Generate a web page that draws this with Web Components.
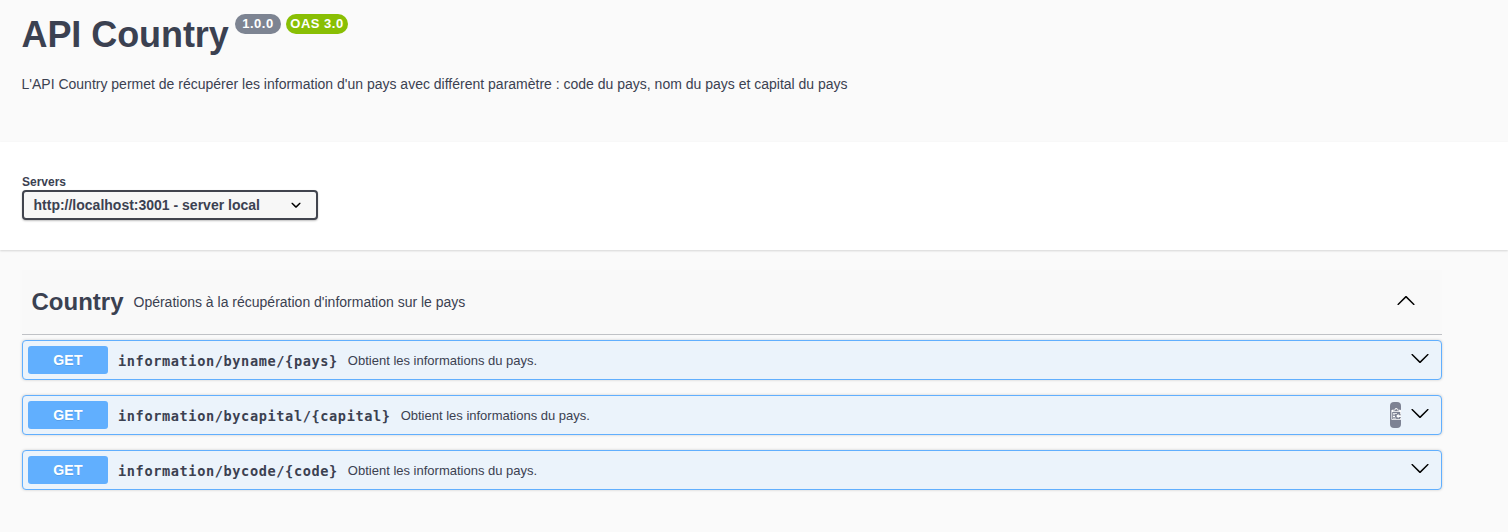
<!DOCTYPE html>
<html lang="fr">
<head>
<meta charset="utf-8">
<title>API Country</title>
<style>
body{margin:0;background:#fafafa;font-family:"Liberation Sans",Arial,sans-serif;color:#3b4151;height:532px;overflow:hidden}
</style>
</head>
<body>
<api-docs></api-docs>
<script>
function define(name, html, setup) {
  const template = document.createElement('template');
  template.innerHTML = html;
  customElements.define(name, class extends HTMLElement {
    connectedCallback() {
      if (this.shadowRoot) return;
      const root = this.attachShadow({ mode: 'open' });
      root.append(template.content.cloneNode(true));
      if (setup) setup(this, root);
    }
  });
}

const CHEVRON_DOWN = 'M17.418 6.109c.272-.268.709-.268.979 0s.271.701 0 .969l-7.908 7.83c-.27.268-.707.268-.979 0l-7.908-7.83c-.27-.268-.27-.701 0-.969.271-.268.709-.268.979 0L10 13.25l7.418-7.141z';
const CHEVRON_UP = 'M17.418 14.908c.272.268.709.268.979 0s.271-.701 0-.969l-7.908-7.83c-.27-.268-.707-.268-.979 0l-7.908 7.83c-.27.268-.27.701 0 .969.271.268.709.268.979 0L10 7.767l7.418 7.141z';
const CHEVRON_SMALL = 'M13.418 7.859c.271-.268.709-.268.978 0 .27.268.272.701 0 .969l-3.908 3.83c-.27.268-.707.268-.979 0l-3.908-3.83c-.27-.267-.27-.701 0-.969.271-.268.709-.268.978 0L10 11l3.418-3.141z';

define('chevron-icon', `
<style>:host{display:block;flex:none;width:20px;height:20px}svg{display:block}</style>
<svg width="20" height="20" viewBox="0 0 20 20"><path/></svg>`, (el, root) => {
  const shapes = { up: CHEVRON_UP, small: CHEVRON_SMALL };
  root.querySelector('path').setAttribute('d', shapes[el.getAttribute('kind')] || CHEVRON_DOWN);
});

define('version-badge', `
<style>
:host{display:flex;align-items:center;justify-content:center;box-sizing:border-box;width:46px;height:20px;border-radius:10px;background:#7d8492;color:#fff;font:bold 13px/20px "Liberation Sans",Arial,sans-serif;letter-spacing:.5px;white-space:nowrap}
:host([oas]){width:62px;background:#89bf04}
</style><slot></slot>`);

define('api-info', `
<style>
:host{display:block;box-sizing:border-box;height:142px;padding:14px 22px 0 21.5px}
header{display:flex;height:41px;gap:5px;align-items:flex-start}
h1{margin:0 2.5px 0 0;font-size:36px;line-height:41px;width:206px;letter-spacing:-.07px;white-space:nowrap}
p{margin:21px 0 0;font-size:14px;line-height:16px;white-space:nowrap}
</style>
<header><h1><slot name="title"></slot></h1><slot name="badges"></slot></header>
<p><slot></slot></p>`);

define('server-picker', `
<style>
:host{display:block;box-sizing:border-box;height:108px;padding:33px 22px 0;background:#fff;box-shadow:0 1px 2px rgba(0,0,0,.15)}
label{display:block;font-size:12px;font-weight:bold;line-height:15px;height:15px}
.select{display:flex;justify-content:space-between;align-items:center;box-sizing:border-box;width:296px;height:30px;padding:0 10px 0 9.5px;border:2px solid #41444e;border-radius:4px;background:#f7f7f7;box-shadow:0 1px 2px rgba(0,0,0,.25);font-size:14px;font-weight:bold}
</style>
<label>Servers</label>
<div class="select"><span><slot></slot></span><chevron-icon kind="small"></chevron-icon></div>`);

define('tag-section', `
<style>
:host{display:block;width:1420px;margin:20px 0 0 22px}
header{display:flex;align-items:center;box-sizing:border-box;height:65px;padding:0 26px 0 9.5px;background:#f9f9f9;border-bottom:1px solid rgba(59,65,81,.3)}
h3{margin:0;width:102px;font-size:24px;line-height:28px}
p{margin:0;flex:1;font-size:14px;line-height:16px}
chevron-icon{margin-bottom:4px}
.ops{display:flex;flex-direction:column;gap:15px;padding-top:5px}
</style>
<header><h3><slot name="title"></slot></h3><p><slot name="description"></slot></p><chevron-icon kind="up"></chevron-icon></header>
<div class="ops"><slot></slot></div>`);

define('copy-button', `
<style>
:host{display:flex;align-items:center;box-sizing:border-box;flex:none;width:11px;height:26px;padding:0 0 1px 1px;border-radius:4px;background:#7d8293;overflow:hidden}
svg{display:block;flex:none}
</style>
<svg width="12" height="13" viewBox="1.5 0 15 16"><path fill="#fff" d="M4 12h4v1H4v-1zm5-6H4v1h5V6zm2 3V7l-3 3 3 3v-2h5V9h-5zM6.5 8H4v1h2.5V8zM4 11h2.5v-1H4v1zm9 1h1v2c-.02.28-.11.52-.3.7-.19.18-.42.28-.7.3H3c-.55 0-1-.45-1-1V3c0-.55.45-1 1-1h3c0-1.11.89-2 2-2 1.11 0 2 .89 2 2h3c.55 0 1 .45 1 1v5h-1V5H3v9h10v-2zM4 4h8c0-.55-.45-1-1-1h-1c-.55 0-1-.45-1-1s-.45-1-1-1-1 .45-1 1-.45 1-1 1H5c-.55 0-1 .45-1 1z"/></svg>`);

define('api-operation', `
<style>
:host{display:flex;align-items:center;box-sizing:border-box;height:40px;padding:0 11px 0 5px;border:1px solid #61affe;border-radius:4px;background:#ebf3fb;box-shadow:0 0 3px rgba(0,0,0,.19)}
.method{width:80px;height:28px;border-radius:3px;background:#61affe;color:#fff;font-size:14px;font-weight:bold;line-height:28px;letter-spacing:.3px;text-align:center;text-shadow:0 1px 0 rgba(0,0,0,.1)}
.path{margin:2px 10px 0;font:bold 13.6px/18px "DejaVu Sans Mono",monospace;letter-spacing:.61px;white-space:nowrap}
.summary{flex:1;margin-top:2px;font-size:13px;line-height:16px}
chevron-icon{margin:0 0 4px 9px}
</style>
<span class="method">GET</span><span class="path"></span><span class="summary"><slot></slot></span><slot name="action"></slot><chevron-icon></chevron-icon>`, (el, root) => {
  root.querySelector('.path').textContent = el.getAttribute('path');
});

define('api-docs', `
<style>:host{display:block}</style>
<api-info><span slot="title">API Country</span>
<version-badge slot="badges">1.0.0</version-badge><version-badge slot="badges" oas>OAS 3.0</version-badge>L'API Country permet de récupérer les information d'un pays avec différent paramètre : code du pays, nom du pays et capital du pays</api-info>
<server-picker>http://localhost:3001 - server local</server-picker>
<tag-section>
<span slot="title">Country</span><span slot="description">Opérations à la récupération d'information sur le pays</span>
<api-operation path="information/byname/{pays}">Obtient les informations du pays.</api-operation>
<api-operation path="information/bycapital/{capital}">Obtient les informations du pays.<copy-button slot="action"></copy-button></api-operation>
<api-operation path="information/bycode/{code}">Obtient les informations du pays.</api-operation>
</tag-section>`);
</script>
</body>
</html>
